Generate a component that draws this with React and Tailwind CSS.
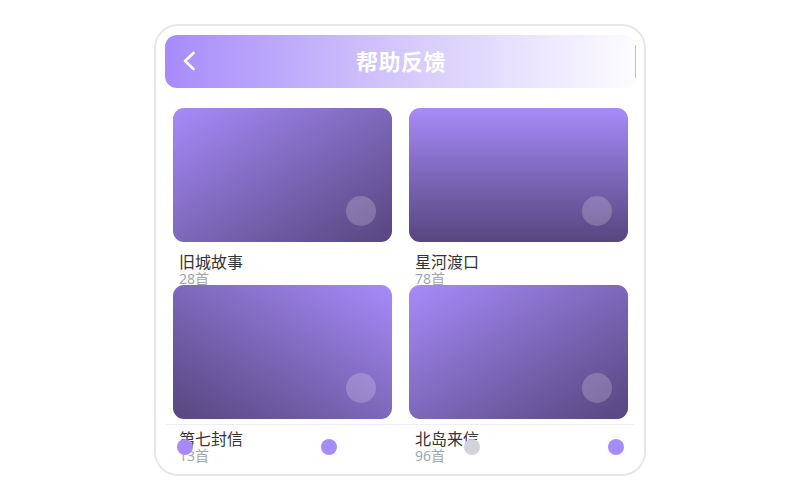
const ALBUMS = [
  { id: 1, title: "旧城故事", count: 28, grad: "bg-gradient-to-br" },
  { id: 2, title: "星河渡口", count: 78, grad: "bg-gradient-to-b" },
  { id: 3, title: "第七封信", count: 13, grad: "bg-gradient-to-bl" },
  { id: 4, title: "北岛来信", count: 96, grad: "bg-gradient-to-br" },
];

const TABS = ["bg-[#a78bfa]", "bg-[#a78bfa]", "bg-[#d1d5db]", "bg-[#a78bfa]"];

function BackIcon() {
  return (
    <svg width="14" height="20" viewBox="0 0 14 20" fill="none">
      <polyline
        points="11.5,2 3,10 11.5,18"
        stroke="white"
        strokeWidth="2.6"
        strokeLinecap="round"
        strokeLinejoin="round"
      />
    </svg>
  );
}

export default function App() {
  return (
    <div className="w-full h-screen bg-white flex items-center justify-center font-['Noto_Sans','Noto_Sans_CJK_SC',sans-serif]">
      <div className="relative w-[492px] h-[452px] rounded-[24px] border-2 border-[#e6e7eb] bg-white overflow-hidden pl-[9px] pr-[7px] pt-[9px]">
        {/* 顶部标题栏 */}
        <div className="relative h-[53px] rounded-[12px] bg-gradient-to-r from-[#a78bfa] via-[#d4c8fb] to-[#fdfcff] flex items-center justify-center">
          <button className="absolute left-[17px] top-[16px]">
            <BackIcon />
          </button>
          <h1 className="text-white text-[22px] font-bold tracking-[0.5px]">帮助反馈</h1>
          <div className="absolute right-[1px] top-[10px] w-px h-[33px] bg-[#c4b5fd]" />
        </div>

        {/* 专辑列表 */}
        <div className="pl-[8px] pr-[9px] pt-[20px] grid grid-cols-2 gap-x-[17px]">
          {ALBUMS.map((album) => (
            <div key={album.id} className="h-[177px]">
              <div className={`relative h-[134px] rounded-[11px] ${album.grad} from-[#a78bfa] to-[#57467f]`}>
                <div className="absolute right-[16px] bottom-[16px] w-[30px] h-[30px] rounded-full bg-white/20" />
              </div>
              <div className="px-[6px] mt-[11px]">
                <p className="text-[16px] leading-[18px] text-[#333333]">{album.title}</p>
                <p className="text-[14px] leading-4 text-[#a3a6ad]">{album.count}首</p>
              </div>
            </div>
          ))}
        </div>

        {/* 底部导航 */}
        <div className="absolute left-[10px] right-[10px] bottom-[6px] h-[44px] border-t border-[#eceef2] flex items-center justify-between pl-[11px] pr-[10px]">
          {TABS.map((color, i) => (
            <span key={i} className={`w-4 h-4 rounded-full ${color}`} />
          ))}
        </div>
      </div>
    </div>
  );
}
